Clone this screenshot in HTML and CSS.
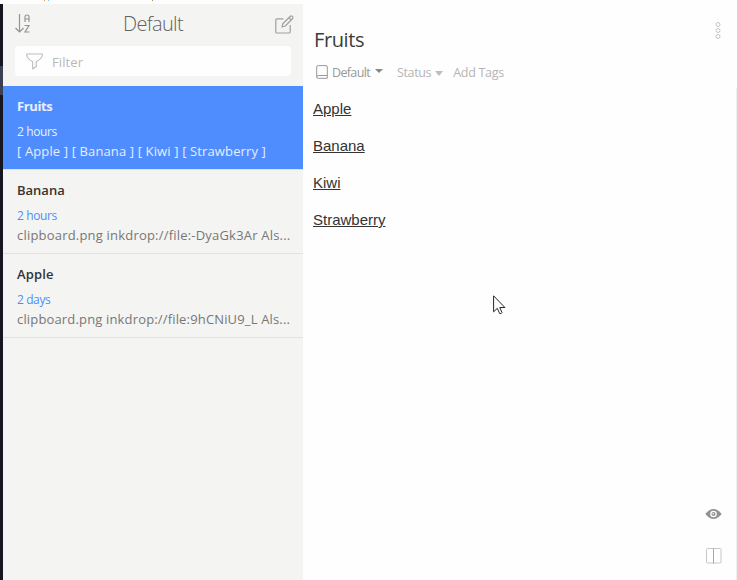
FILE: index.html
```html
<!DOCTYPE html>
<html lang="en">
<head>
<meta charset="utf-8">
<title>Notes</title>
<link rel="stylesheet" href="styles.css">
</head>
<body>
<div class="top-edge"><i class="speck orange"></i><i class="speck sky"></i><i class="speck gold"></i></div>
<div class="app">
  <div class="rail"><div class="rail-active"></div></div>
  <aside class="sidebar">
    <header class="list-header">
      <svg class="sort" width="16" height="20" viewBox="0 0 16 20" fill="none" stroke="#949494" stroke-width="1.2">
        <path d="M4.5 0V17.5M.5 14L4.5 18L8.5 14"/>
        <path d="M10 8V2.5Q10 1 12 1T14 2.5V8M10 5H14M9.5 11.5H14L10 18H14.5"/>
      </svg>
      <h1 class="list-title">Default</h1>
      <svg class="compose" width="19" height="19" viewBox="0 0 19 19" fill="none" stroke="#a0a0a0" stroke-width="1.2" stroke-linejoin="round">
        <path d="M8.5 3.8H2Q.8 3.8 .8 5V17Q.8 18 2 18H14Q15.2 18 15.2 17V10"/>
        <path d="M7 12L7.8 8.8L15.4 1.3Q16.3 .5 17.3 1.4T17.7 3.5L10.2 11L7 12ZM14 2.7L16.3 5"/>
      </svg>
    </header>
    <div class="filter">
      <svg width="17" height="17" viewBox="0 0 17 17" fill="none" stroke="#bcbcbc" stroke-width="1.1" stroke-linejoin="round">
        <path d="M.7 1H16.3V2.5Q15.5 6 10.3 8.7V13.5L6.7 16V8.7Q1.5 6 .7 2.5Z"/>
      </svg>
      <span class="filter-label">Filter</span>
    </div>
    <article class="note selected">
      <h2 class="note-title">Fruits</h2>
      <div class="note-age">2 hours</div>
      <div class="note-body"><span class="links">[ Apple ] [ Banana ] [ Kiwi ] [ Strawberry ]</span></div>
    </article>
    <article class="note">
      <h2 class="note-title">Banana</h2>
      <div class="note-age">2 hours</div>
      <div class="note-body"><span class="clip-a">clipboard.png inkdrop://file:-DyaGk3Ar Als...</span></div>
    </article>
    <article class="note">
      <h2 class="note-title apple">Apple</h2>
      <div class="note-age">2 days</div>
      <div class="note-body"><span class="clip-b">clipboard.png inkdrop://file:9hCNiU9_L Als...</span></div>
    </article>
  </aside>
  <main class="editor">
    <section class="content">
      <h1 class="doc-title">Fruits</h1>
      <div class="meta">
        <svg class="book" width="12" height="14" viewBox="0 0 12 14" fill="none" stroke="#999">
          <path d="M11.3 10.5H2.5Q.7 10.5 .7 12T2.5 13.3H11.3M.7 12V2Q.7 .6 2.2 .6H10Q11.3 .6 11.3 2V13.3"/>
        </svg>
        <span class="book-name">Default</span><i class="caret dark"></i>
        <span class="status">Status</span><i class="caret"></i>
        <span class="tags">Add Tags</span>
      </div>
      <div class="links-list">
        <p><a>Apple</a></p><p><a>Banana</a></p><p><a>Kiwi</a></p><p><a>Strawberry</a></p>
      </div>
    </section>
    <nav class="tools">
      <svg class="more" width="6" height="17" viewBox="0 0 6 17" fill="none" stroke="#c4c4c4">
        <circle cx="3" cy="2.5" r="2"/><circle cx="3" cy="8.5" r="2"/><circle cx="3" cy="14.5" r="2"/>
      </svg>
      <svg class="eye" width="17" height="10" viewBox="0 0 17 10">
        <path d="M.3 5Q8.5 -5 16.7 5Q8.5 15 .3 5Z" fill="#929292"/>
        <circle cx="8.5" cy="5" r="3.3" fill="#fefefe"/><circle cx="8.5" cy="5" r="2" fill="#929292"/><circle cx="8.2" cy="4.7" r=".8" fill="#fefefe"/>
      </svg>
      <svg class="split" width="16" height="16" viewBox="0 0 16 16" fill="none" stroke="#c8c8c8">
        <rect x=".5" y=".5" width="14.5" height="14.5" rx="1"/><path d="M7.5 .5V15.5" stroke="#a8a8a8"/>
      </svg>
    </nav>
    <div class="scroll"></div>
  </main>
</div>
<svg class="cursor" width="13" height="20" viewBox="0 0 13 20">
  <path d="M.6 .8V16.8L4.3 13.3L6.7 18.5Q8.2 19.2 9 17.6L6.8 12.5H11.9Z" fill="#fff" stroke="#26242e"/>
</svg>
</body>
</html>
```

FILE: styles.css
```css
* { box-sizing: border-box; }
body { margin: 0; width: 737px; height: 580px; overflow: hidden; background: #fefefe; font-family: "Open Sans", "Noto Sans", sans-serif; }
h1, h2, p { margin: 0; font-weight: 400; }
svg { display: block; flex: none; }
.top-edge { height: 4px; display: flex; padding-left: 44px; gap: 3px; }
.speck { width: 1px; height: 1px; }
.orange { background: #e8a33c; }
.sky { background: #73bfe8; }
.gold { background: #b08a50; margin-left: 100px; }
.app { display: flex; height: 576px; }
.rail { width: 3px; background: #151620; padding-top: 62px; }
.rail-active { height: 29px; background: #3b4152; }
.sidebar { width: 300px; background: #f4f4f2; }
.list-header { height: 42px; display: flex; align-items: flex-start; justify-content: space-between; padding: 10px 9px 0 12px; }
.compose { margin-top: 1px; }
.list-title { font-size: 20px; line-height: 28px; font-weight: 300; color: #626262; letter-spacing: -.7px; margin-top: -4px; }
.filter { height: 30px; margin: 0 12px 10px; background: #fefefe; border-radius: 4px; display: flex; align-items: center; padding: 0 11px; gap: 9px; }
.filter-label { font-size: 13px; color: #b9b9b9; letter-spacing: .1px; padding-top: 1px; }
.note { height: 84px; padding: 11px 13px 0 14px; border-bottom: 1px solid #e2e2e1; white-space: nowrap; color: #777; }
.note-title { font-size: 13px; line-height: 18px; font-weight: 600; color: #333; }
.apple { letter-spacing: .15px; }
.note-age { font-size: 12px; line-height: 18px; margin-top: 8px; color: #4f8efc; letter-spacing: -.4px; }
.note-body { font-size: 13px; line-height: 20px; letter-spacing: .2px; }
.clip-b { letter-spacing: .16px; }
.selected { background: #4f8dfe; color: #e4eeff; }
.links { letter-spacing: .13px; }
.selected .note-title, .selected .note-age { color: #e8f0ff; }
.selected .note-title { font-weight: 700; letter-spacing: -.4px; }
.editor { position: relative; flex: 1; display: flex; justify-content: space-between; }
.content { padding: 21px 0 0 10px; }
.doc-title { font-size: 20px; line-height: 30px; color: #3c3c3c; letter-spacing: -.4px; padding-left: 1px; }
.meta { display: flex; align-items: center; height: 18px; margin: 9px 0 18px 3px; font-size: 12.5px; line-height: 18px; color: #b5b5b5; white-space: nowrap; }
.book { margin-top: -2px; }
.book-name { color: #999; margin-left: 4px; letter-spacing: -.65px; }
.caret { border: 4px solid transparent; border-top: 5px solid #bdbdbd; border-bottom: 0; margin-left: 4px; }
.dark { border-top: 4px solid #888; margin: 0 0 4px 5px; }
.status { margin-left: 14px; letter-spacing: -.35px; }
.tags { margin-left: 10px; letter-spacing: -.3px; }
.links-list { font: 15px/17px "Liberation Sans", Arial, sans-serif; color: #333; }
.links-list p { margin-bottom: 20px; }
.links-list a { text-decoration: underline; }
.tools { display: flex; flex-direction: column; align-items: center; width: 17px; margin-right: 15px; padding-top: 18px; }
.more { margin-left: 9px; }
.eye { margin-top: 470px; }
.split { margin-top: 29px; }
.scroll { position: absolute; right: 0; top: 84px; bottom: 0; width: 1px; background: #efefef; }
.cursor { position: absolute; left: 493px; top: 295px; }
```
